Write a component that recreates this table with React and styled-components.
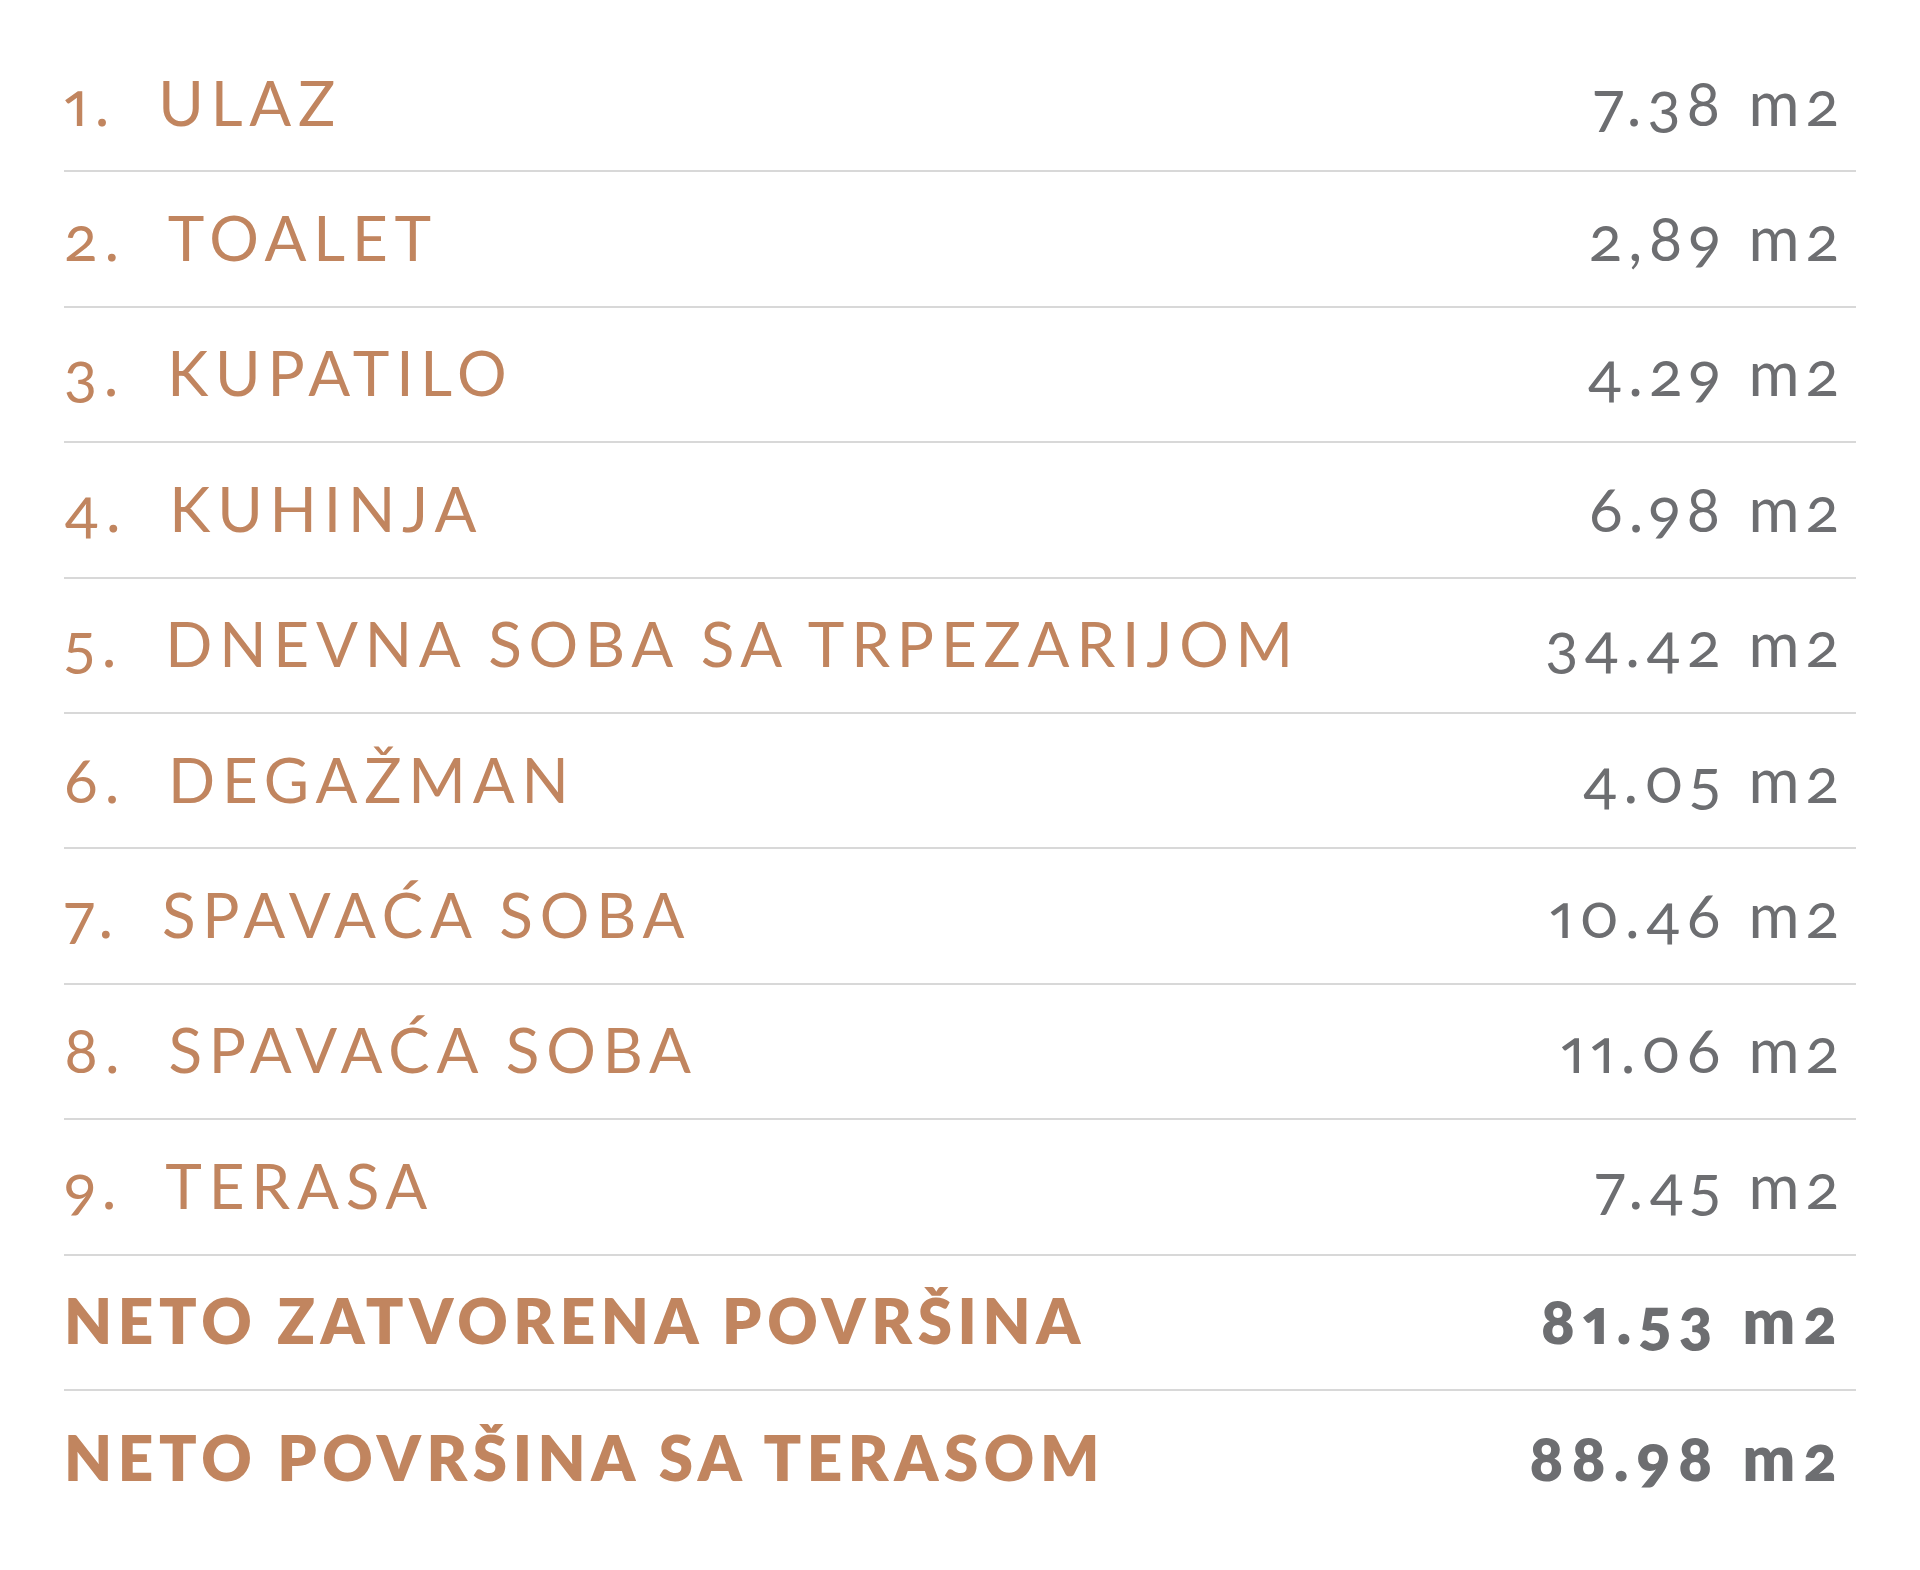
import styled, { createGlobalStyle } from "styled-components";

const GlobalStyle = createGlobalStyle`
  body {
    margin: 0;
    background: #ffffff;
    font-family: Lato, "Noto Sans", sans-serif;
  }
`;

const rooms = [
  { no: 1, name: "ULAZ", area: "7.38" },
  { no: 2, name: "TOALET", area: "2,89" },
  { no: 3, name: "KUPATILO", area: "4.29" },
  { no: 4, name: "KUHINJA", area: "6.98" },
  { no: 5, name: "DNEVNA SOBA SA TRPEZARIJOM", area: "34.42" },
  { no: 6, name: "DEGAŽMAN", area: "4.05" },
  { no: 7, name: "SPAVAĆA SOBA", area: "10.46" },
  { no: 8, name: "SPAVAĆA SOBA", area: "11.06" },
  { no: 9, name: "TERASA", area: "7.45" },
];

const totals = [
  { name: "NETO ZATVORENA POVRŠINA", area: "81.53" },
  { name: "NETO POVRŠINA SA TERASOM", area: "88.98" },
];

const Table = styled.div`
  margin: 0 64px;
  padding-top: 37px;
`;

const Row = styled.div`
  display: flex;
  align-items: center;
  justify-content: space-between;
  box-sizing: border-box;
  height: 135.4px;
  padding: 0 11px 4px 0;
  border-bottom: 2px solid #d8d8d8;

  &:last-child {
    border-bottom: 0;
  }
`;

const Label = styled.div`
  display: flex;
  align-items: baseline;
  font-size: 62px;
  line-height: 1;
  font-weight: ${(p) => (p.$total ? 800 : 400)};
  letter-spacing: ${(p) => (p.$total ? "5.6px" : "6.8px")};
  color: #c1855f;
  font-variant-numeric: oldstyle-nums proportional-nums;
  white-space: nowrap;
`;

const Num = styled.span`
  margin-right: 42px;
`;

const Area = styled.div`
  font-size: 62px;
  line-height: 1;
  font-weight: ${(p) => (p.$total ? 800 : 400)};
  letter-spacing: ${(p) => (p.$total ? "8px" : "6px")};
  color: #6d6e71;
  font-variant-numeric: oldstyle-nums proportional-nums;
  white-space: nowrap;
`;

export default function App() {
  return (
    <>
      <GlobalStyle />
      <Table>
        {rooms.map((r) => (
          <Row key={r.no}>
            <Label>
              <Num>{r.no}.</Num>
              <span>{r.name}</span>
            </Label>
            <Area>{r.area} m2</Area>
          </Row>
        ))}
        {totals.map((t) => (
          <Row key={t.name}>
            <Label $total>{t.name}</Label>
            <Area $total>{t.area} m2</Area>
          </Row>
        ))}
      </Table>
    </>
  );
}
